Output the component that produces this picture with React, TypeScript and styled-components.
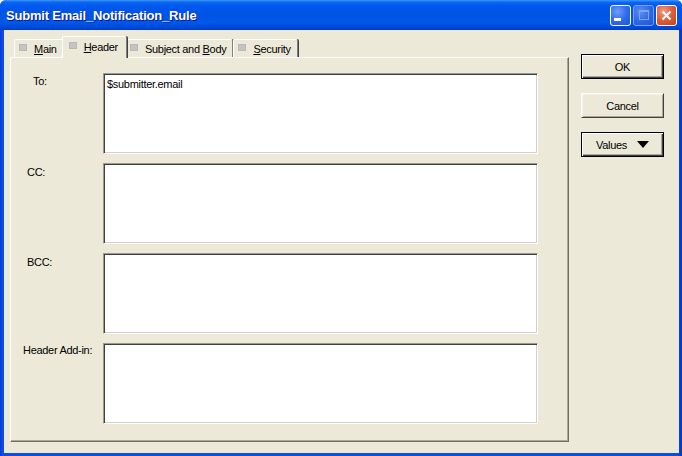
import React from "react";
import styled, { createGlobalStyle } from "styled-components";

const GlobalStyle = createGlobalStyle`
  html, body {
    margin: 0;
    padding: 0;
    background: #ffffff;
  }
  body {
    font-family: "Liberation Sans", Arial, sans-serif;
    font-size: 11px;
    letter-spacing: -0.3px;
    color: #000;
  }
`;

// Window frame
const Window = styled.div`
  width: 682px;
  height: 456px;
  display: flex;
  flex-direction: column;
  background: linear-gradient(to right, #0831d9 0px, #0a4fe0 2px, #0a4fe0 678px, #0431c8 682px);
  border-radius: 6px 6px 0 0;
  overflow: hidden;
`;

const TitleBar = styled.div`
  height: 30px;
  flex: none;
  display: flex;
  align-items: center;
  padding: 0 5px 0 6px;
  background: linear-gradient(
    to bottom,
    #3d95ff 0%,
    #0a66f0 8%,
    #0058ee 20%,
    #0054e3 50%,
    #0058ea 75%,
    #0049d6 92%,
    #003dc0 100%
  );
`;

const Title = styled.div`
  flex: 1;
  color: #ffffff;
  font-weight: bold;
  font-size: 13px;
  letter-spacing: -0.2px;
  text-shadow: 1px 1px 0 #0a1883;
`;

const CaptionButtons = styled.div`
  display: flex;
  gap: 2px;
`;

const CaptionButton = styled.div<{ $kind: "min" | "max" | "close" }>`
  width: 21px;
  height: 21px;
  box-sizing: border-box;
  border: 1px solid ${(p) => (p.$kind === "max" ? "#7da2ee" : "#ffffff")};
  border-radius: 3px;
  display: flex;
  align-items: center;
  justify-content: center;
  background: ${(p) =>
    p.$kind === "close"
      ? "radial-gradient(circle at 35% 30%, #f0a08a 0%, #e0603c 45%, #c4401c 100%)"
      : p.$kind === "max"
      ? "radial-gradient(circle at 35% 30%, #5d8ef0 0%, #2a64e4 60%, #2158d8 100%)"
      : "radial-gradient(circle at 35% 30%, #6f9cf8 0%, #2f6cec 50%, #1a55e0 100%)"};
`;

const MinBar = styled.div`
  width: 7px;
  height: 3px;
  background: #ffffff;
  margin: 9px 6px 0 0;
`;

const MaxBox = styled.div`
  width: 8px;
  height: 7px;
  border: 1px solid #7da2ee;
  border-top-width: 2px;
`;

// Dialog body
const Body = styled.div`
  flex: 1;
  margin: 0 3px 3px 4px;
  background: #ece9d8;
  display: flex;
  gap: 12px;
  padding: 6px 0 0 6px;
`;

const TabArea = styled.div`
  width: 559px;
  height: 406px;
  display: flex;
  flex-direction: column;
`;

const TabStrip = styled.div`
  height: 21px;
  display: flex;
  align-items: flex-end;
  padding-left: 4px;
`;

const Tab = styled.div<{ $active?: boolean }>`
  height: ${(p) => (p.$active ? "22px" : "18px")};
  margin: ${(p) => (p.$active ? "0 -2px -1px -2px" : "0")};
  padding: ${(p) => (p.$active ? "0 8px 2px 6px" : "0 6px 0 4px")};
  box-sizing: border-box;
  display: flex;
  align-items: center;
  gap: 7px;
  background: #ece9d8;
  border-top: 1px solid #ffffff;
  border-left: 1px solid #ffffff;
  border-right: 1px solid #808080;
  box-shadow: 1px 0 0 #404040;
  border-radius: 2px 2px 0 0;
  position: relative;
  z-index: ${(p) => (p.$active ? 2 : 1)};
  white-space: nowrap;
`;

const TabIcon = styled.span`
  width: 8px;
  height: 7px;
  background: #c4c4c4;
  box-shadow: inset 0 0 0 1px #b8b8b8;
  flex: none;
  margin-top: -2px;
`;

const Panel = styled.div`
  flex: 1;
  box-sizing: border-box;
  border: 1px solid;
  border-color: #ffffff #716f64 #716f64 #ffffff;
  box-shadow: inset -1px -1px 0 #aca899;
  display: grid;
  grid-template-columns: 92px 435px;
  grid-auto-rows: 81px;
  row-gap: 9px;
  padding-top: 15px;
  align-content: start;
`;

const Label = styled.div<{ $indent: number; $top: number }>`
  padding-left: ${(p) => p.$indent}px;
  padding-top: ${(p) => p.$top}px;
  white-space: nowrap;
`;

const Field = styled.div`
  box-sizing: border-box;
  background: #ffffff;
  border: 1px solid;
  border-color: #9d9a8c #ffffff #ffffff #9d9a8c;
  box-shadow: inset 1px 1px 0 #404040, inset -1px -1px 0 #d4d0c8;
  padding: 4px 3px 0 3px;
`;

const ButtonColumn = styled.div`
  width: 83px;
  display: flex;
  flex-direction: column;
  gap: 14px;
  padding-top: 18px;
`;

const Button = styled.div<{ $framed?: boolean }>`
  height: 25px;
  box-sizing: border-box;
  display: flex;
  align-items: center;
  justify-content: center;
  gap: 10px;
  background: #ece9d8;
  border: 1px solid;
  border-color: ${(p) => (p.$framed ? "#000000" : "#ffffff #404040 #404040 #ffffff")};
  box-shadow: ${(p) =>
    p.$framed
      ? "inset 1px 1px 0 #ffffff, inset -1px -1px 0 #404040, inset -2px -2px 0 #aca899"
      : "inset 1px 1px 0 #f5f4ea, inset -1px -1px 0 #aca899"};
`;

const Arrow = styled.span`
  width: 0;
  height: 0;
  border-left: 6px solid transparent;
  border-right: 6px solid transparent;
  border-top: 7px solid #000000;
`;

const fields = [
  { label: "To:", indent: 22, top: 2, value: "$submitter.email" },
  { label: "CC:", indent: 16, top: 3, value: "" },
  { label: "BCC:", indent: 16, top: 3, value: "" },
  { label: "Header Add-in:", indent: 12, top: 1, value: "" },
];

const App: React.FC = () => {
  return (
    <>
      <GlobalStyle />
      <Window>
        <TitleBar>
          <Title>Submit Email_Notification_Rule</Title>
          <CaptionButtons>
            <CaptionButton $kind="min">
              <MinBar />
            </CaptionButton>
            <CaptionButton $kind="max">
              <MaxBox />
            </CaptionButton>
            <CaptionButton $kind="close">
              <svg width="11" height="11" viewBox="0 0 11 11">
                <path d="M1.5 1.5 L9.5 9.5 M9.5 1.5 L1.5 9.5" stroke="#ffffff" strokeWidth="2" />
              </svg>
            </CaptionButton>
          </CaptionButtons>
        </TitleBar>
        <Body>
          <TabArea>
            <TabStrip>
              <Tab>
                <TabIcon />
                <span>
                  <u>M</u>ain
                </span>
              </Tab>
              <Tab $active>
                <TabIcon />
                <span>
                  <u>H</u>eader
                </span>
              </Tab>
              <Tab>
                <TabIcon />
                <span>
                  Subject and <u>B</u>ody
                </span>
              </Tab>
              <Tab>
                <TabIcon />
                <span>
                  <u>S</u>ecurity
                </span>
              </Tab>
            </TabStrip>
            <Panel>
              {fields.map((f) => (
                <React.Fragment key={f.label}>
                  <Label $indent={f.indent} $top={f.top}>
                    {f.label}
                  </Label>
                  <Field>{f.value}</Field>
                </React.Fragment>
              ))}
            </Panel>
          </TabArea>
          <ButtonColumn>
            <Button $framed>OK</Button>
            <Button>Cancel</Button>
            <Button $framed>
              <span>Values</span>
              <Arrow />
            </Button>
          </ButtonColumn>
        </Body>
      </Window>
    </>
  );
};

export default App;
